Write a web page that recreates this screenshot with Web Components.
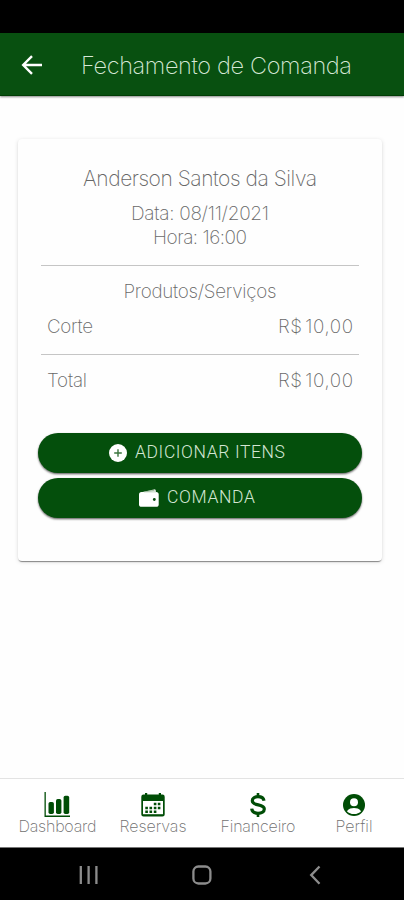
<!DOCTYPE html>
<html lang="pt-BR">
<head>
<meta charset="utf-8">
<title>Fechamento de Comanda</title>
<style>
html,body{margin:0;height:100%;background:#fefefe}
body{font-family:Inter,"Liberation Sans",sans-serif;font-weight:200;color:#686868;overflow:hidden}
</style>
</head>
<body>
<comanda-app></comanda-app>
<script>
const define = (name, html, setup) => customElements.define(name, class extends HTMLElement {
  connectedCallback() {
    if (this.shadowRoot) return;
    const t = document.createElement('template');
    t.innerHTML = html;
    this.attachShadow({ mode: 'open' }).append(t.content.cloneNode(true));
    if (setup) setup(this, this.shadowRoot);
  }
});

const icons = {
  back: '<svg width="22" height="20" viewBox="0 0 22 20" fill="none" stroke="#fff" stroke-width="2.4"><path d="M11 1.2 2.2 10l8.8 8.8M2.2 10H21"/></svg>',
  plus: '<svg width="18" height="18" viewBox="0 0 18 18"><circle cx="9" cy="9" r="9" fill="#fff"/><path d="M9 5.2v7.6M5.2 9h7.6" stroke="#3b753e" stroke-width="1.4"/></svg>',
  wallet: '<svg width="20" height="18" viewBox="0 0 20 18"><path d="M2.3 3.2 14.8.4q1.7-.3 2 1.2l.3 1.9H1.5z" fill="#dfe9df"/><path d="M6 2.9 15.2 1.3" stroke="#7da17e" stroke-width=".6"/><rect y="2.9" width="19.7" height="14.9" rx="2.6" fill="#fff"/><path d="M5 3.1h12" stroke="#aac5aa" stroke-width=".5"/><circle cx="15.3" cy="10.5" r="1.4" fill="#064a0d"/></svg>',
  chart: '<svg width="27" height="26" viewBox="0 0 27 26" fill="#004d06"><path d="M.5 0h1.3v23.6H26V25H.5z"/><rect x="4.5" y="10" width="5.4" height="12" rx="1.7"/><rect x="12" y="7" width="5.4" height="15" rx="1.7"/><rect x="19.6" y="3.7" width="5.6" height="18.3" rx="1.7"/></svg>',
  calendar: '<svg width="24" height="24" viewBox="0 0 24 24"><path d="M2.5 1.5H4V0h2.2v1.5h11.6V0H20v1.5h1.5q2.2 0 2.2 2.2v17.8q0 2-2.2 2h-19q-2.2 0-2.2-2V3.7q0-2.2 2.2-2.2" fill="#004d06"/><path d="M2 8h20v13.2H2z" fill="#fff"/><g fill="#004d06"><path d="M12.8 9.8h2.6v2.4h-2.6zM16.8 9.8h2.6v2.4h-2.6zM4.3 13.8h2.6v2.4H4.3zM8.5 13.8h2.6v2.4H8.5zM12.8 13.8h2.6v2.4h-2.6zM16.8 13.8h2.6v2.4h-2.6zM4.3 17.6h2.6V20H4.3zM8.5 17.6h2.6V20H8.5zM12.8 17.6h2.6V20h-2.6z"/></g></svg>',
  dollar: '<svg width="16" height="24" viewBox="0 0 16 24" fill="none" stroke="#004d06" stroke-width="3.2"><path d="M8 0v4M8 20v4" stroke-width="2.6"/><path d="M14 7.8C13.5 4.8 11.2 3.7 8 3.7S2.3 5.1 2.3 7.7c0 5.8 12 2.5 12 8.3 0 2.7-2.7 4.3-6.3 4.3s-6-1.6-6.3-4.6"/></svg>',
  person: '<svg width="22" height="22" viewBox="0 0 22 22"><circle cx="11" cy="11" r="11" fill="#004d06"/><circle cx="11" cy="8.2" r="4" fill="#fff"/><path d="M3.9 17.2C6 14.7 8.3 14.1 11 14.1s5 .6 7.1 3.1C16.3 19.1 14 20 11 20s-5.3-.9-7.1-2.8" fill="#fff"/></svg>'
};

// A line of text tracked so that it spans the width given in its attribute.
define('tracked-text', `<style>:host{display:block;white-space:nowrap;flex:none;line-height:1}span{display:inline-block}</style><span><slot></slot></span>`, (el, root) => {
  const span = root.querySelector('span'), target = +el.getAttribute('span-width'), n = el.textContent.length;
  const gap = (target - span.getBoundingClientRect().width) / (n - 1);
  span.style.letterSpacing = gap + 'px';
  span.style.marginRight = -gap + 'px';
});
define('app-icon', `<style>:host{display:flex;flex:none}svg{display:block}</style>`, (el, root) => root.append(document.createRange().createContextualFragment(icons[el.getAttribute('name')])));
define('status-strip', `<style>:host{display:block;height:33px;background:#000;flex:none}</style>`);
define('app-bar', `<style>:host{display:flex;align-items:center;flex:none;height:63px;padding-left:21px;box-sizing:border-box;background:#085010;color:#d6e8d6;font-size:23.5px;box-shadow:inset 0 -1px #003d05,0 1px 2px #0007;gap:38px;padding-top:2px}app-icon{margin-top:-1px}</style><app-icon name="back"></app-icon><slot></slot>`);
define('summary-card', `<style>:host{display:flex;flex-direction:column;margin:43px 22px 0 18px;height:422px;padding:0 20px;box-sizing:border-box;background:#fefefe;border-radius:4px;box-shadow:0 2px 1px -1px #0005,0 1px 1px #0002,0 1px 4px #0002;flex:none}</style><slot></slot>`);
define('centered-line', `<style>:host{display:flex;justify-content:center;align-items:center;height:24px}</style><slot></slot>`);
define('rule-line', `<style>:host{display:block;height:1px;margin:0 3px;background:#c5c5c5}</style>`);
define('price-row', `<style>:host{display:flex;justify-content:space-between;align-items:center;height:24px;padding:0 9px;font-size:18.8px;word-spacing:-3px}</style><slot></slot>`);
define('pill-button', `<style>:host{display:flex;justify-content:center;align-items:center;height:40px;border-radius:20px;background:#044f0c;color:#d3e6d3;font-size:17.5px;font-weight:300;font-family:Roboto,sans-serif;gap:8px;box-shadow:0 1px 2px #0008,0 2px 2px #0002;margin:0 0 5px;padding-right:6px;box-sizing:border-box}</style><slot></slot>`);
define('tab-bar', `<style>:host{display:grid;grid-template-columns:115px 76px 134px 58px;height:70px;box-sizing:border-box;border-top:1px solid #e3e3e3;border-bottom:1px solid #777;background:#fff;flex:none}</style><slot></slot>`);
define('tab-item', `<style>:host{display:flex;flex-direction:column;align-items:center;font-size:16px;color:#707070}.i{height:26px;display:flex;align-items:center;margin:13px 0 0}</style><div class="i"><slot name="icon"></slot></div><slot></slot>`);
define('system-nav', `<style>:host{display:flex;height:52px;background:#000;flex:none;justify-content:center}svg{display:block}</style><svg width="404" height="52" fill="none" stroke="#8c8c8c" stroke-width="2.3"><path d="M80.8 18v18M88.6 18v18M96.4 18v18M319.5 18.5l-8.3 8.6 8.3 8.6"/><rect x="193.4" y="18.5" width="17" height="17" rx="5"/></svg>`);

define('comanda-app', `<style>
:host{display:flex;flex-direction:column;width:404px;height:900px;background:#fefefe}
.space{flex:1}.client{font-size:21px;margin-top:27px}.date{font-size:19px;margin-top:11px}.time{font-size:19px;margin-bottom:15.5px}
.section{font-size:18.8px;margin-top:14.5px}.first{margin:11px 0 15px}.total{margin:14px 0 40px}
</style>
<status-strip></status-strip>
<app-bar><tracked-text span-width="271">Fechamento de Comanda</tracked-text></app-bar>
<summary-card>
<centered-line class="client"><tracked-text span-width="234">Anderson Santos da Silva</tracked-text></centered-line>
<centered-line class="date"><tracked-text span-width="138">Data: 08/11/2021</tracked-text></centered-line>
<centered-line class="time"><tracked-text span-width="94">Hora: 16:00</tracked-text></centered-line>
<rule-line></rule-line>
<centered-line class="section"><tracked-text span-width="153">Produtos/Serviços</tracked-text></centered-line>
<price-row class="first"><tracked-text span-width="46">Corte</tracked-text><tracked-text span-width="75">R$ 10,00</tracked-text></price-row>
<rule-line></rule-line>
<price-row class="total"><tracked-text span-width="40">Total</tracked-text><tracked-text span-width="75">R$ 10,00</tracked-text></price-row>
<pill-button><app-icon name="plus"></app-icon><tracked-text span-width="150">ADICIONAR ITENS</tracked-text></pill-button>
<pill-button><app-icon name="wallet"></app-icon><tracked-text span-width="88">COMANDA</tracked-text></pill-button>
</summary-card>
<div class="space"></div>
<tab-bar>
<tab-item><app-icon slot="icon" name="chart"></app-icon><tracked-text span-width="78">Dashboard</tracked-text></tab-item>
<tab-item><app-icon slot="icon" name="calendar"></app-icon><tracked-text span-width="67">Reservas</tracked-text></tab-item>
<tab-item><app-icon slot="icon" name="dollar"></app-icon><tracked-text span-width="75">Financeiro</tracked-text></tab-item>
<tab-item><app-icon slot="icon" name="person"></app-icon><tracked-text span-width="37">Perfil</tracked-text></tab-item>
</tab-bar>
<system-nav></system-nav>`);
</script>
</body>
</html>
